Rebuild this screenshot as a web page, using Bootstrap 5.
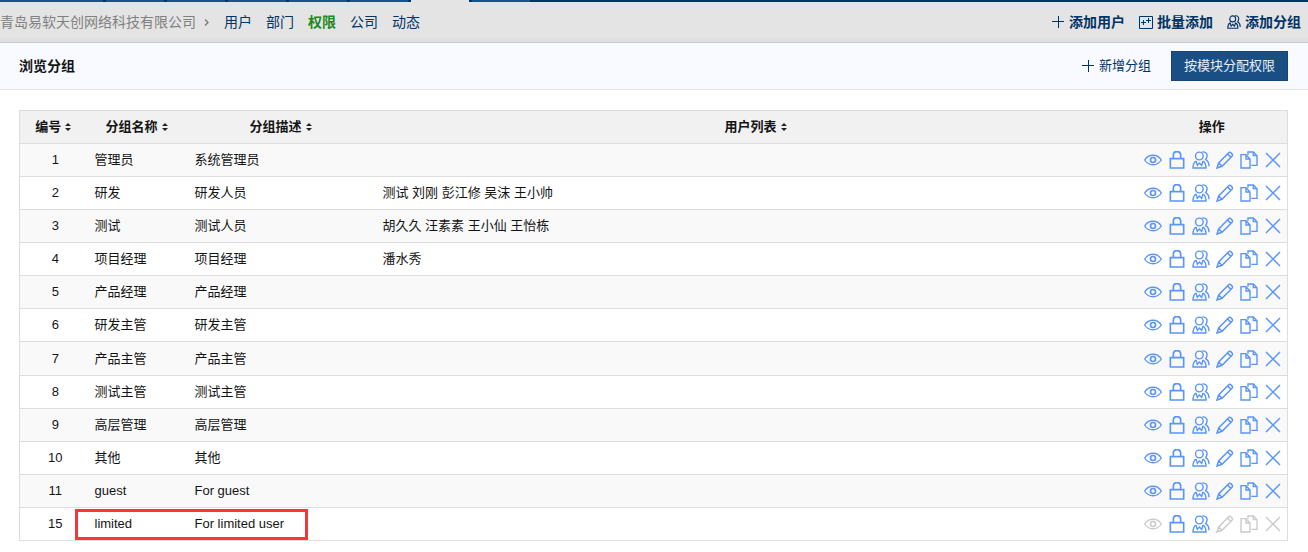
<!DOCTYPE html>
<html lang="zh-CN">
<head>
<meta charset="utf-8">
<meta name="viewport" content="width=device-width, initial-scale=1">
<title>浏览分组</title>
<link href="https://cdn.jsdelivr.net/npm/bootstrap@5.3.0/dist/css/bootstrap.min.css" rel="stylesheet">
<style>
  body { font-family: "Liberation Sans", "Noto Sans CJK SC", sans-serif; font-size: 13px; line-height: 20px; color: #141414; background: #fff; }
  a { color: #003366; text-decoration: none; }
  .main-tabs { height: 2px; gap: 3px; background: #003366; }
  .main-tabs a { width: 58px; background: #145490; }
  .main-tabs a:first-child { width: 103px; }
  .main-tabs a.current { background: #e4e4e4; }
  .module-bar { height: 41px; padding-right: 7px; font-size: 14px; background: linear-gradient(#e4e4e4 85%, #dedede); border-bottom: 1px solid #cacaca; }
  .module-bar nav, .module-bar .tools { gap: 14px; }
  .company { color: #808080; }
  .crumb { width: 28px; padding-left: 8px; }
  .module-bar a.current { color: #1a8a1a; }
  .with-icon { gap: 4px; }
  .title-bar { height: 47px; padding: 0 20px 0 19px; background: #f8faff; border-bottom: 1px solid #e5e5e5; }
  .title-bar h1 { font-size: 14px; line-height: 20px; }
  .title-bar .actions { gap: 20px; }
  .btn-assign { --bs-btn-font-size: 13px; --bs-btn-line-height: 20px; --bs-btn-padding-x: 12px; --bs-btn-padding-y: 4px; --bs-btn-border-radius: 0; --bs-btn-color: #e8eef5; --bs-btn-bg: #1a4f85; --bs-btn-border-color: #164475; --bs-btn-hover-color: #fff; --bs-btn-hover-bg: #164475; }
  .btn-plain { --bs-btn-font-size: 13px; --bs-btn-line-height: 20px; --bs-btn-padding-x: 0; --bs-btn-padding-y: 0; --bs-btn-border-width: 0; --bs-btn-color: #003366; }
  .groups { padding: 20px 20px 11px 19px; }
  .group-table { height: 431px; table-layout: fixed; border: 1px solid #ddd; --bs-table-color: #141414; --bs-table-striped-color: #141414; --bs-table-striped-bg: #f9f9f9; }
  .group-table > :not(caption) > * > * { padding: 6px 8px; border-bottom: 1px solid #ddd; }
  .group-table > thead > tr > th { background: #f1f1f1; text-align: center; vertical-align: middle; }
  .group-table tbody td:first-child { padding-left: 12px; }
  .group-table > tbody > tr > .ops { padding: 0 2px 0 4px; }
  .col-id { width: 67px; } .col-name { width: 100px; } .col-desc { width: 188px; } .col-ops { width: 151px; }
  .sort { gap: 4px; color: inherit; }
  .op-btn { width: 24px; height: 24px; color: #5a95fb; }
  .op-btn:disabled { color: #ccc; opacity: 1; }
  .op-btn svg { fill: none; stroke: currentColor; stroke-width: 5; }
  .line-icon { fill: none; stroke: #003366; stroke-width: 1; }
  .line-icon.detailed { stroke-width: 4; }
  .highlight { position: absolute; left: -12px; top: 1px; bottom: 0; width: 233px; border: 3px solid #f93535; pointer-events: none; }
</style>
</head>
<body>
<svg class="d-none">
  <symbol id="eye" viewBox="0 0 54 54"><path d="M2 27C14 8 40 8 52 27C40 46 14 46 2 27Z" stroke-width="4"/><circle cx="27" cy="27" r="7.5"/></symbol>
  <symbol id="lock" viewBox="0 0 54 54"><path d="M7 23H47V51H7ZM16 23V13C16-2 38-2 38 13V23"/></symbol>
  <symbol id="users" viewBox="0 0 54 54" stroke-width="4.2"><circle cx="22" cy="15" r="11.5"/><path d="M12 30C6 34 3 40 3 51H42C42 40 39 34 33 30M12 30L16 43L22 36L29 43L33 30"/><path d="M31 3C45 1 49 14 41 26C48 30 51 37 51 46"/></symbol>
  <symbol id="pencil" viewBox="0 0 54 54"><path d="M3 51L8 36L38 5C42 1 53 10 48 16L18 46ZM8 36L18 46M35 9L44 19" stroke-width="4.5"/></symbol>
  <symbol id="copy" viewBox="0 0 54 54" stroke-width="4.2"><path d="M3 11H18L30 24V51H3ZM18 11V24H30"/><path d="M24 11V3H40L51 14V43H34M40 3V14H51"/></symbol>
  <symbol id="cross" viewBox="0 0 54 54"><path d="M6 6L48 48M48 6L6 48" stroke-width="4.5"/></symbol>
  <symbol id="sorter" viewBox="0 0 6 8"><path d="M0 3L3 0L6 3ZM0 5L3 8L6 5Z" fill="#222"/></symbol>
  <symbol id="plus" viewBox="0 0 14 14"><path d="M1 6.5H13M7.5 1V13"/></symbol>
</svg>

<header>
  <div class="main-tabs d-flex">
    <a href="#" aria-label="首页"></a><a href="#" aria-label="产品"></a><a href="#" aria-label="项目"></a><a href="#" aria-label="测试"></a><a href="#" aria-label="文档"></a><a href="#" aria-label="统计"></a><a href="#" class="current" aria-label="组织"></a><a href="#" aria-label="后台"></a>
  </div>
  <div class="module-bar d-flex align-items-center justify-content-between">
    <div class="d-flex align-items-center">
      <a href="#" class="company">青岛易软天创网络科技有限公司</a>
      <span class="crumb d-flex"><svg width="5" height="7" viewBox="0 0 5 7" aria-hidden="true"><path d="M1 .5L4 3.5L1 6.5" fill="none" stroke="#777" stroke-width="1.3"/></svg></span>
      <nav class="d-flex">
        <a href="#">用户</a><a href="#">部门</a><a href="#" class="current fw-bold">权限</a><a href="#">公司</a><a href="#">动态</a>
      </nav>
    </div>
    <div class="tools d-flex fw-bold">
      <a href="#" class="with-icon d-flex align-items-center"><svg class="line-icon" width="14" height="14"><use href="#plus"/></svg>添加用户</a>
      <a href="#" class="with-icon d-flex align-items-center"><svg class="line-icon" width="14" height="14" viewBox="0 0 14 14"><path d="M.5 1.5H13.5V13.5H.5ZM2 7.5H7M4.5 5V10M7 5.5H12M9.5 3V8"/></svg>批量添加</a>
      <a href="#" class="with-icon d-flex align-items-center"><svg class="line-icon detailed" width="14" height="14"><use href="#users"/></svg>添加分组</a>
    </div>
  </div>
</header>

<div class="title-bar d-flex align-items-center justify-content-between">
  <h1 class="m-0 fw-bold">浏览分组</h1>
  <div class="actions d-flex align-items-center">
    <a href="#" class="btn btn-plain with-icon d-flex align-items-center"><svg class="line-icon" width="14" height="14"><use href="#plus"/></svg>新增分组</a>
    <button type="button" class="btn btn-assign">按模块分配权限</button>
  </div>
</div>

<main class="groups">
  <table class="table table-striped group-table m-0 align-middle">
    <colgroup><col class="col-id"><col class="col-name"><col class="col-desc"><col><col class="col-ops"></colgroup>
    <thead>
      <tr>
        <th scope="col"><a href="#" class="sort d-inline-flex align-items-center">编号<svg width="6" height="8"><use href="#sorter"/></svg></a></th>
        <th scope="col"><a href="#" class="sort d-inline-flex align-items-center">分组名称<svg width="6" height="8"><use href="#sorter"/></svg></a></th>
        <th scope="col"><a href="#" class="sort d-inline-flex align-items-center">分组描述<svg width="6" height="8"><use href="#sorter"/></svg></a></th>
        <th scope="col"><a href="#" class="sort d-inline-flex align-items-center">用户列表<svg width="6" height="8"><use href="#sorter"/></svg></a></th>
        <th scope="col">操作</th>
      </tr>
    </thead>
    <tbody id="groupRows"></tbody>
  </table>
</main>

<script src="https://cdn.jsdelivr.net/npm/bootstrap@5.3.0/dist/js/bootstrap.bundle.min.js"></script>
<script>
  const groups = [
    [1, '管理员', '系统管理员', ''],
    [2, '研发', '研发人员', '测试 刘刚 彭江修 吴沫 王小帅'],
    [3, '测试', '测试人员', '胡久久 汪素素 王小仙 王怡栋'],
    [4, '项目经理', '项目经理', '潘水秀'],
    [5, '产品经理', '产品经理', ''],
    [6, '研发主管', '研发主管', ''],
    [7, '产品主管', '产品主管', ''],
    [8, '测试主管', '测试主管', ''],
    [9, '高层管理', '高层管理', ''],
    [10, '其他', '其他', ''],
    [11, 'guest', 'For guest', ''],
    [15, 'limited', 'For limited user', '']
  ];
  const ops = [['eye', '视图维护'], ['lock', '权限维护'], ['users', '成员维护'], ['pencil', '编辑'], ['copy', '复制'], ['cross', '删除']];
  document.getElementById('groupRows').innerHTML = groups.map(([id, name, desc, users]) => {
    const limited = name === 'limited';
    const buttons = ops.map(([icon, label]) => {
      const off = limited && icon !== 'lock' && icon !== 'users' ? 'disabled' : '';
      return `<button type="button" class="op-btn btn border-0 p-0 rounded-0 d-flex align-items-center justify-content-center" aria-label="${label}" ${off}><svg width="18" height="18"><use href="#${icon}"/></svg></button>`;
    }).join('');
    return `<tr><td class="text-center">${id}</td><td class="position-relative">${name}${limited ? '<span class="highlight"></span>' : ''}</td><td>${desc}</td><td>${users}</td><td class="ops"><div class="d-flex">${buttons}</div></td></tr>`;
  }).join('');
</script>
</body>
</html>
